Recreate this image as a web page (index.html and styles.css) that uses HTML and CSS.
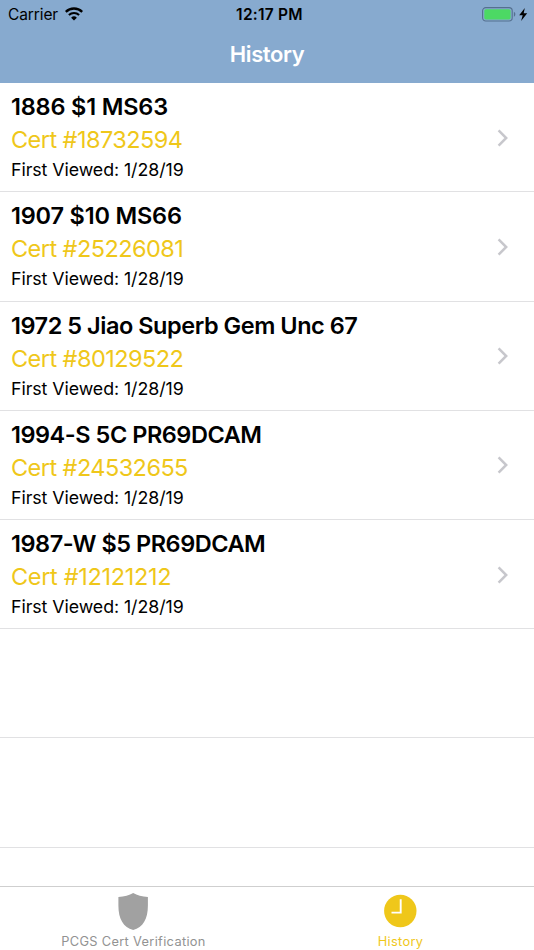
FILE: index.html
```html
<!DOCTYPE html>
<html lang="en">
<head>
    <meta charset="UTF-8">
    <meta name="viewport" content="width=device-width, initial-scale=1.0">
    <title>History</title>
    <link rel="stylesheet" href="styles.css">
</head>
<body>

    <!-- Header -->
    <header class="header">
        <div class="status-bar">
            <div class="carrier">
                <span>Carrier</span>
                <svg class="wifi" width="18" height="14" viewBox="0 0 18 14">
                    <path d="M.8 4.8a11.8 11.8 0 0 1 16.400 0" fill="none" stroke="#000" stroke-width="2.300"/>
                    <path d="M3.900 8a7.400 7.400 0 0 1 10.200 0" fill="none" stroke="#000" stroke-width="2.100"/>
                    <path d="M9 13.6L6.1 10.7a4.2 4.2 0 0 1 5.8 0z"/>
                </svg>
            </div>
            <div class="time">12:17 PM</div>
            <div class="power">
                <svg width="46" height="16" viewBox="0 0 46 16">
                    <rect x="0.6" y="0.6" width="29.6" height="13.4" rx="3.2" fill="none" stroke="#55708f" stroke-width="1.1"/>
                    <rect x="2.3" y="2.2" width="26.3" height="10.2" rx="1.6" fill="#4cd964"/>
                    <path d="M31.9 4.8c1.9.7 1.9 4.3 0 5z" fill="#55708f"/>
                    <path d="M42.8 .9L37.2 8.3h3.5l-1.6 5.800L45.2 6.300h-3.500z"/>
                </svg>
            </div>
        </div>
        <h1 class="title">History</h1>
    </header>

    <!-- Viewed certs -->
    <main class="list">
        <a href="#" class="row">
            <div class="details">
                <h2>1886 $1 MS63</h2>
                <p class="cert">Cert #18732594</p>
                <p class="viewed">First Viewed: 1/28/19</p>
            </div>
            <svg class="chevron" width="12" height="18" viewBox="0 0 12 18"><path d="M1.6 1.4L9.2 9L1.6 16.6"/></svg>
        </a>
        <a href="#" class="row">
            <div class="details">
                <h2>1907 $10 MS66</h2>
                <p class="cert">Cert #25226081</p>
                <p class="viewed">First Viewed: 1/28/19</p>
            </div>
            <svg class="chevron" width="12" height="18" viewBox="0 0 12 18"><path d="M1.6 1.4L9.2 9L1.6 16.6"/></svg>
        </a>
        <a href="#" class="row">
            <div class="details">
                <h2 class="long">1972 5 Jiao Superb Gem Unc 67</h2>
                <p class="cert">Cert #80129522</p>
                <p class="viewed">First Viewed: 1/28/19</p>
            </div>
            <svg class="chevron" width="12" height="18" viewBox="0 0 12 18"><path d="M1.6 1.4L9.2 9L1.6 16.6"/></svg>
        </a>
        <a href="#" class="row">
            <div class="details">
                <h2 class="long">1994-S 5C PR69DCAM</h2>
                <p class="cert">Cert #24532655</p>
                <p class="viewed">First Viewed: 1/28/19</p>
            </div>
            <svg class="chevron" width="12" height="18" viewBox="0 0 12 18"><path d="M1.6 1.4L9.2 9L1.6 16.6"/></svg>
        </a>
        <a href="#" class="row">
            <div class="details">
                <h2 class="long">1987-W $5 PR69DCAM</h2>
                <p class="cert narrow">Cert #12121212</p>
                <p class="viewed">First Viewed: 1/28/19</p>
            </div>
            <svg class="chevron" width="12" height="18" viewBox="0 0 12 18"><path d="M1.6 1.4L9.2 9L1.6 16.6"/></svg>
        </a>
        <div class="row"></div>
        <div class="row"></div>
    </main>

    <!-- Tab Bar -->
    <nav class="tab-bar">
        <a href="#" class="tab">
            <svg width="34" height="38" viewBox="0 0 34 38">
                <path d="M16.2 1Q22 4.3 30.9 5V13.5C30.9 27 26 35.5 16.2 37.9C6.400 35.5 1.400 27 1.400 13.5V5Q10.400 4.3 16.200 1z" fill="#a1a1a1"/>
            </svg>
            <span>PCGS Cert Verification</span>
        </a>
        <a href="#" class="tab active">
            <svg width="34" height="38" viewBox="0 0 34 38">
                <circle cx="16.3" cy="19" r="16.2" fill="#efc71a"/>
                <path d="M16.7 7.300V20.600H7.500" fill="none" stroke="#fff" stroke-width="1.900"/>
            </svg>
            <span>History</span>
        </a>
    </nav>

</body>
</html>
```

FILE: styles.css
```css
/* General Styles */
body {
    font-family: Inter, 'Liberation Sans', sans-serif;
    margin: 0;
    height: 950px;
    display: flex;
    flex-direction: column;
    overflow: hidden;
    background: #fff;
    color: #000;
}

h1, h2, p {
    margin: 0;
}

a {
    color: inherit;
    text-decoration: none;
}

svg {
    display: block;
    flex: none;
}

/* Header */
.header {
    height: 83.2px;
    flex: none;
    background: #87aacf;
}

.status-bar {
    display: grid;
    grid-template-columns: 1fr auto 1fr;
    align-items: center;
    height: 28px;
    padding: 0 6px 0 8px;
}

.carrier {
    display: flex;
    align-items: center;
    gap: 7px;
    font-size: 15.5px;
    letter-spacing: -0.1px;
    line-height: 29px;
}

.wifi {
    margin-bottom: 2px;
}

.time {
    padding-left: 3px;
    font-size: 15.5px;
    font-weight: 600;
    letter-spacing: 0.25px;
    line-height: 29px;
}

.power {
    justify-self: end;
}

.title {
    color: #fff;
    font-size: 22px;
    font-weight: 600;
    letter-spacing: -0.4px;
    line-height: 53px;
    text-align: center;
}

/* History List */
.list {
    flex: 1;
    min-height: 0;
    overflow: hidden;
}

.row {
    display: flex;
    align-items: center;
    justify-content: space-between;
    box-sizing: border-box;
    height: 109.2px;
    padding: 0 25px 0 11px;
    border-bottom: 1px solid #e1e1e3;
}

.row h2 {
    font-size: 23.5px;
    font-weight: 600;
    letter-spacing: -0.18px;
    line-height: 33px;
}

.row h2.long {
    letter-spacing: -0.46px;
}

.cert {
    color: #efc71a;
    font-size: 23.5px;
    letter-spacing: -0.56px;
    line-height: 33px;
}

.cert.narrow {
    letter-spacing: -0.32px;
}

.viewed {
    font-size: 17.8px;
    letter-spacing: -0.07px;
    line-height: 28px;
}

.chevron {
    margin-top: 1px;
}

.chevron path {
    fill: none;
    stroke: #c7c7cc;
    stroke-width: 2.5;
}

/* Tab Bar */
.tab-bar {
    display: flex;
    flex: none;
    box-sizing: border-box;
    height: 64px;
    border-top: 1px solid #cfcfcf;
}

.tab {
    flex: 1;
    display: flex;
    flex-direction: column;
    align-items: center;
    padding-top: 5px;
    color: #929292;
    font-size: 12.8px;
    letter-spacing: 0.33px;
    line-height: 23px;
}

.tab.active {
    color: #efc71a;
}
```
